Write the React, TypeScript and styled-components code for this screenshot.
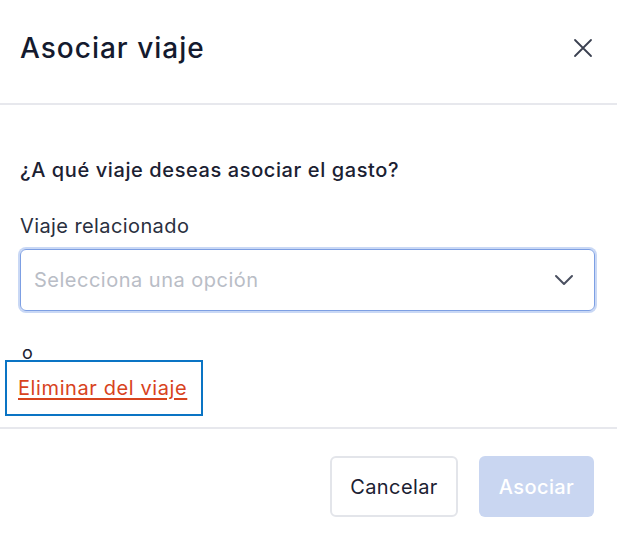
import styled, { createGlobalStyle } from 'styled-components';

const GlobalStyle = createGlobalStyle`
  html, body {
    margin: 0;
    padding: 0;
    background: #ffffff;
  }
  body {
    font-family: Inter, "Noto Sans", sans-serif;
    color: #1b2132;
  }
`;

const Dialog = styled.div`
  width: 617px;
  height: 541px;
  display: flex;
  flex-direction: column;
  background: #ffffff;
`;

const Header = styled.div`
  height: 106px;
  padding: 0 22px 8px 20px;
  display: flex;
  align-items: center;
  justify-content: space-between;
  border-bottom: 2px solid #e7e8ed;
  box-sizing: border-box;
`;

const Title = styled.h2`
  margin: 0;
  font-size: 28px;
  font-weight: 500;
  letter-spacing: 1px;
  color: #141a2e;
`;

const CloseButton = styled.button`
  border: none;
  background: none;
  padding: 0;
  width: 24px;
  height: 24px;
  display: flex;
  align-items: center;
  justify-content: center;
  color: #3a4050;
  cursor: pointer;
`;

const Body = styled.div`
  padding: 52px 22px 0 20px;
  display: flex;
  flex-direction: column;
  flex: 1;
`;

const Question = styled.p`
  margin: 0;
  font-size: 20px;
  line-height: 26px;
  font-weight: 500;
  letter-spacing: 0.6px;
  color: #1b2132;
`;

const Label = styled.label`
  margin-top: 30px;
  font-size: 20px;
  line-height: 26px;
  letter-spacing: 0.4px;
  color: #2a3040;
`;

const Select = styled.div`
  margin-top: 10px;
  height: 62px;
  box-sizing: border-box;
  border: 1px solid #7d9fe3;
  border-radius: 6px;
  box-shadow: 0 0 0 2px #c9d8f5;
  display: flex;
  align-items: center;
  justify-content: space-between;
  padding: 0 20px 0 13px;
`;

const Placeholder = styled.span`
  font-size: 20px;
  letter-spacing: 0.5px;
  color: #b9bdc6;
`;

const Or = styled.span`
  margin-top: 35px;
  margin-left: 2px;
  font-size: 18px;
  line-height: 14px;
  color: #1b2132;
`;

const LinkBox = styled.div`
  align-self: flex-start;
  margin-left: -15px;
  width: 198px;
  height: 56px;
  box-sizing: border-box;
  border: 2px solid #0a74c4;
  display: flex;
  align-items: center;
  padding-left: 11px;
`;

const DangerLink = styled.a`
  font-size: 20px;
  letter-spacing: 0.6px;
  color: #d8431d;
  text-decoration: underline;
  text-underline-offset: 3px;
  text-decoration-thickness: 2px;
  cursor: pointer;
`;

const Footer = styled.div`
  margin-top: 11px;
  border-top: 2px solid #e7e8ed;
  height: 114px;
  box-sizing: border-box;
  display: flex;
  justify-content: flex-end;
  align-items: flex-start;
  gap: 21px;
  padding: 27px 23px 0 0;
`;

const Button = styled.button<{ $primary?: boolean }>`
  height: 61px;
  box-sizing: border-box;
  border-radius: 6px;
  font-family: Inter, "Noto Sans", sans-serif;
  font-size: 20px;
  font-weight: ${(p) => (p.$primary ? 500 : 400)};
  letter-spacing: 0.4px;
  padding: 0;
  width: ${(p) => (p.$primary ? '115px' : '128px')};
  background: ${(p) => (p.$primary ? '#c9d6f1' : '#ffffff')};
  color: ${(p) => (p.$primary ? '#ffffff' : '#1b2132')};
  border: ${(p) => (p.$primary ? 'none' : '2px solid #e3e5ea')};
  cursor: pointer;
`;

export default function App() {
  return (
    <Dialog>
      <GlobalStyle />
      <Header>
        <Title>Asociar viaje</Title>
        <CloseButton aria-label="Cerrar">
          <svg width="20" height="20" viewBox="0 0 20 20" fill="none" stroke="currentColor" strokeWidth="1.8" strokeLinecap="round">
            <path d="M2 2 L18 18 M18 2 L2 18" />
          </svg>
        </CloseButton>
      </Header>
      <Body>
        <Question>¿A qué viaje deseas asociar el gasto?</Question>
        <Label>Viaje relacionado</Label>
        <Select>
          <Placeholder>Selecciona una opción</Placeholder>
          <svg width="20" height="12" viewBox="0 0 20 12" fill="none" stroke="#4a5060" strokeWidth="2" strokeLinecap="round" strokeLinejoin="round">
            <path d="M2 2 L10 10 L18 2" />
          </svg>
        </Select>
        <Or>o</Or>
        <LinkBox>
          <DangerLink>Eliminar del viaje</DangerLink>
        </LinkBox>
      </Body>
      <Footer>
        <Button>Cancelar</Button>
        <Button $primary disabled>Asociar</Button>
      </Footer>
    </Dialog>
  );
}
